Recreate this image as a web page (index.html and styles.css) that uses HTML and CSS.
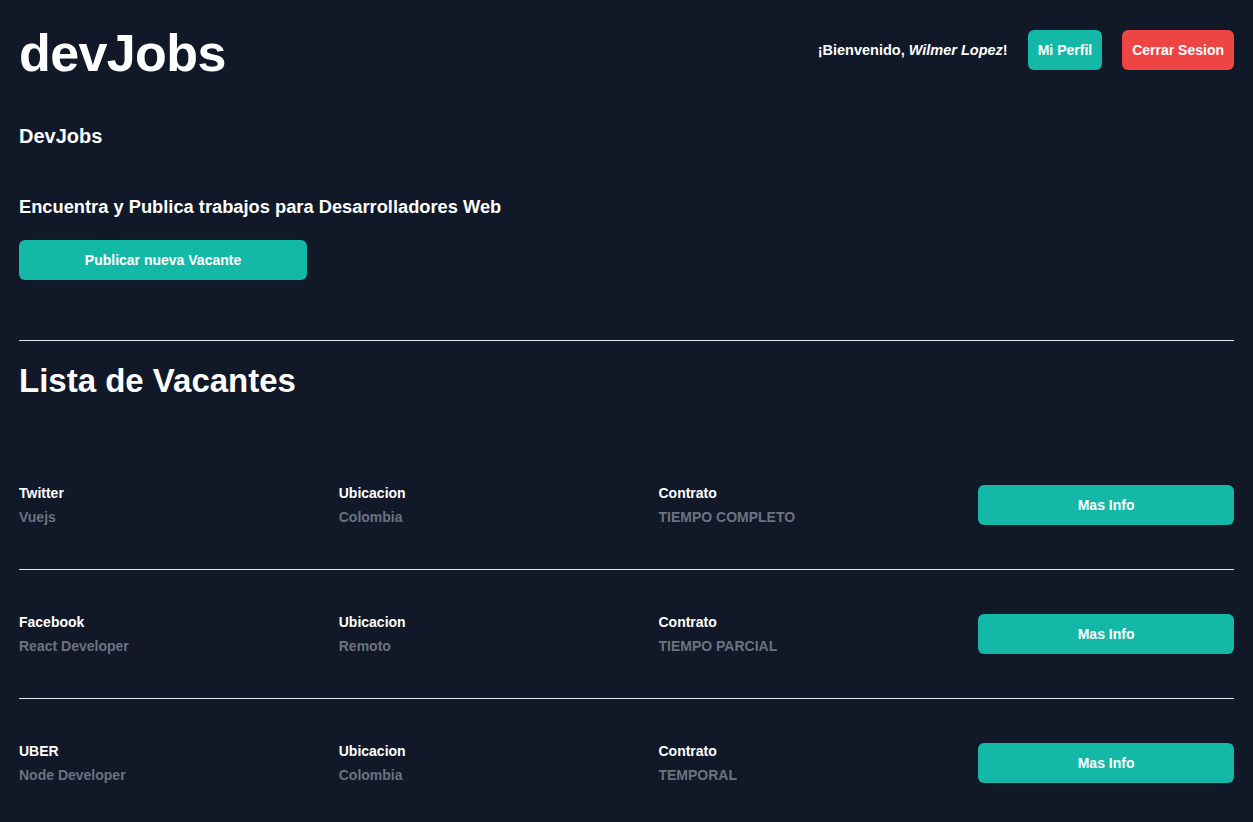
FILE: index.html
```html
<!DOCTYPE html>
<html lang="es">
<head>
<meta charset="utf-8">
<title>devJobs</title>
<link rel="stylesheet" href="styles.css">
</head>
<body>
<div class="page">
  <header class="header">
    <h1 class="logo">devJobs</h1>
    <nav class="nav">
      <span class="welcome">¡Bienvenido, <em>Wilmer Lopez</em>!</span>
      <a class="btn btn-teal btn-sm" href="#">Mi Perfil</a>
      <a class="btn btn-red btn-sm" href="#">Cerrar Sesion</a>
    </nav>
  </header>

  <section class="intro">
    <h2 class="brand">DevJobs</h2>
    <p class="tagline">Encuentra y Publica trabajos para Desarrolladores Web</p>
    <a class="btn btn-teal btn-publish" href="#">Publicar nueva Vacante</a>
  </section>

  <hr class="divider">

  <h2 class="list-title">Lista de Vacantes</h2>

  <ul class="jobs">
    <li class="job">
      <div class="cell"><p class="label">Twitter</p><p class="value">Vuejs</p></div>
      <div class="cell"><p class="label">Ubicacion</p><p class="value">Colombia</p></div>
      <div class="cell"><p class="label">Contrato</p><p class="value">TIEMPO COMPLETO</p></div>
      <a class="btn btn-teal btn-info" href="#">Mas Info</a>
    </li>
    <li class="job">
      <div class="cell"><p class="label">Facebook</p><p class="value">React Developer</p></div>
      <div class="cell"><p class="label">Ubicacion</p><p class="value">Remoto</p></div>
      <div class="cell"><p class="label">Contrato</p><p class="value">TIEMPO PARCIAL</p></div>
      <a class="btn btn-teal btn-info" href="#">Mas Info</a>
    </li>
    <li class="job">
      <div class="cell"><p class="label">UBER</p><p class="value">Node Developer</p></div>
      <div class="cell"><p class="label">Ubicacion</p><p class="value">Colombia</p></div>
      <div class="cell"><p class="label">Contrato</p><p class="value">TEMPORAL</p></div>
      <a class="btn btn-teal btn-info" href="#">Mas Info</a>
    </li>
  </ul>
</div>
</body>
</html>
```
FILE: styles.css
```css
* { box-sizing: border-box; }
html, body {
  margin: 0;
  padding: 0;
  background: #111827;
}
body {
  font-family: "Liberation Sans", Arial, sans-serif;
  color: #ffffff;
  font-weight: 700;
}
.page {
  padding: 0 19px;
}
.header {
  display: flex;
  justify-content: space-between;
  align-items: flex-start;
  padding-top: 23px;
}
.logo {
  margin: 0;
  font-size: 52px;
  line-height: 60px;
  font-weight: 700;
  letter-spacing: -0.6px;
}
.nav {
  display: flex;
  align-items: center;
  gap: 20px;
  margin-top: 7px;
}
.welcome {
  font-size: 14.5px;
  line-height: 20px;
}
.welcome em {
  font-style: italic;
}
.btn {
  display: flex;
  align-items: center;
  justify-content: center;
  color: #ffffff;
  text-decoration: none;
  font-size: 14px;
  line-height: 20px;
  font-weight: 700;
  border-radius: 6px;
}
.btn-teal { background: #14b8a6; }
.btn-red { background: #ef4444; }
.btn-sm {
  padding: 10px 10px;
  height: 40px;
}
.intro {
  margin-top: 39px;
}
.brand {
  margin: 0;
  font-size: 20px;
  line-height: 28px;
}
.tagline {
  margin: 43px 0 0;
  font-size: 18.3px;
  line-height: 28px;
}
.btn-publish {
  margin-top: 19px;
  width: 288px;
  height: 40px;
}
.divider {
  margin: 60px 0 0;
  border: 0;
  border-top: 1px solid #e5e7eb;
}
.list-title {
  margin: 20px 0 0;
  font-size: 33px;
  line-height: 40px;
}
.jobs {
  list-style: none;
  margin: 40px 0 0;
  padding: 0;
}
.job {
  display: grid;
  grid-template-columns: 1fr 1fr 1fr 0.8fr;
  align-items: center;
  padding: 40px 0;
  border-bottom: 1px solid #e5e7eb;
}
.cell p {
  margin: 0;
  font-size: 14px;
  line-height: 24px;
}
.label { color: #ffffff; }
.value { color: #6b7280; }
.btn-info {
  height: 40px;
}
```
